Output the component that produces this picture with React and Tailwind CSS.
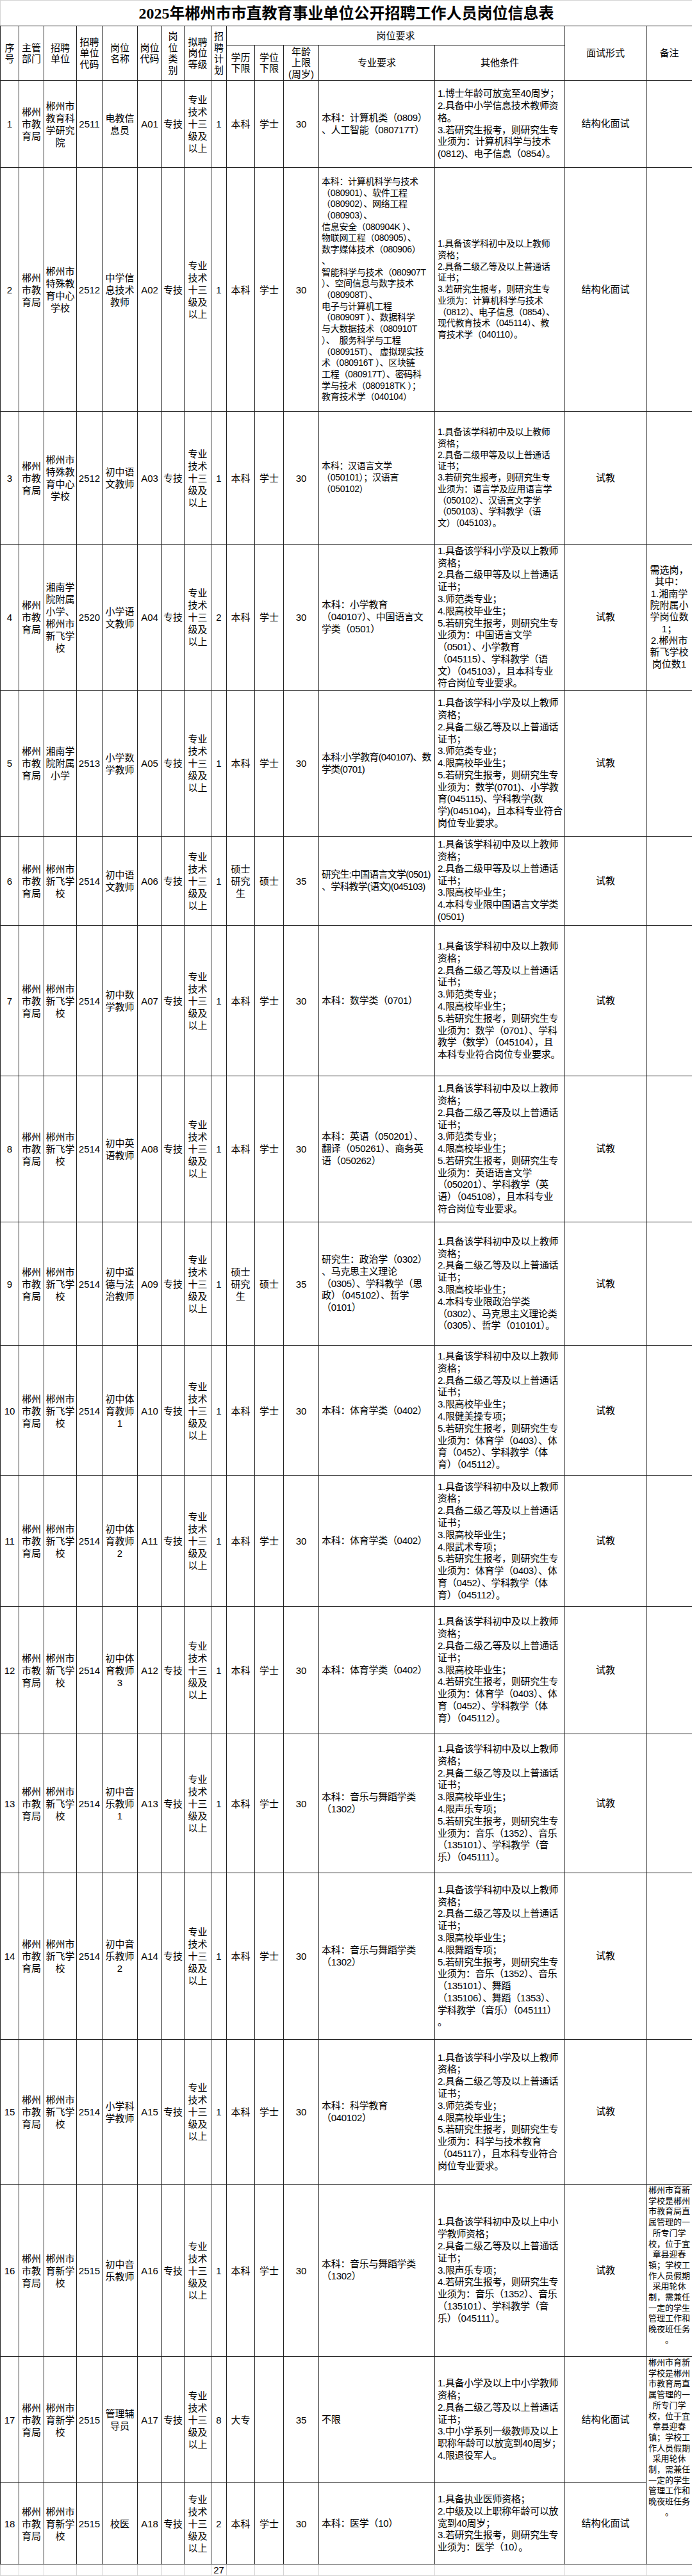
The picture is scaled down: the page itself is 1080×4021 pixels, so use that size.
import React from "react";

const FONT = "font-['Liberation_Sans','Noto_Sans_CJK_SC',sans-serif]";

const noteYuxin = [
  "郴州市育新",
  "学校是郴州",
  "市教育局直",
  "属管理的一",
  "所专门学",
  "校，位于宜",
  "章县迎春",
  "镇；学校工",
  "作人员假期",
  "采用轮休",
  "制，需兼任",
  "一定的学生",
  "管理工作和",
  "晚夜班任务",
  "。",
];

const rows = [
  {
    no: "1", unit: "郴州市教育科学研究院", unitCode: "2511", name: "电教信息员", code: "A01",
    plan: "1", edu: "本科", degree: "学士", age: "30", h: "h-[136px]",
    major: ["本科：计算机类（0809）", "、人工智能（080717T）"],
    other: [
      "1.博士年龄可放宽至40周岁；",
      "2.具备中小学信息技术教师资",
      "格。",
      "3.若研究生报考，则研究生专",
      "业须为：计算机科学与技术",
      "(0812)、电子信息（0854）。",
    ],
    exam: "结构化面试",
  },
  {
    no: "2", unit: "郴州市特殊教育中心学校", unitCode: "2512", name: "中学信息技术教师", code: "A02",
    plan: "1", edu: "本科", degree: "学士", age: "30", h: "h-[381px]", tight: true,
    major: [
      "本科：计算机科学与技术",
      "（080901）、软件工程",
      "（080902）、网络工程",
      "（080903）、",
      "信息安全（080904K ）、",
      "物联网工程（080905）、",
      "数字媒体技术（080906）",
      "、",
      "智能科学与技术（080907T",
      "）、空间信息与数字技术",
      "（080908T）、",
      "电子与计算机工程",
      "（080909T ）、数据科学",
      "与大数据技术（080910T",
      "）、  服务科学与工程",
      "（080915T）、 虚拟现实技",
      "术（080916T ）、区块链",
      "工程（080917T）、密码科",
      "学与技术（080918TK ）；",
      "教育技术学（040104）",
    ],
    other: [
      "1.具备该学科初中及以上教师",
      "资格；",
      "2.具备二级乙等及以上普通话",
      "证书；",
      "3.若研究生报考，则研究生专",
      "业须为：计算机科学与技术",
      "（0812）、电子信息（0854）、",
      "现代教育技术（045114）、教",
      "育技术学（040110）。",
    ],
    exam: "结构化面试",
  },
  {
    no: "3", unit: "郴州市特殊教育中心学校", unitCode: "2512", name: "初中语文教师", code: "A03",
    plan: "1", edu: "本科", degree: "学士", age: "30", h: "h-[207px]", tight: true,
    major: ["本科：汉语言文学", "（050101）；汉语言", "（050102）"],
    other: [
      "1.具备该学科初中及以上教师",
      "资格；",
      "2.具备二级甲等及以上普通话",
      "证书；",
      "3.若研究生报考，则研究生专",
      "业须为：语言学及应用语言学",
      "（050102）、汉语言文字学",
      "（050103）、学科教学（语",
      "文）（045103）。",
    ],
    exam: "试教",
  },
  {
    no: "4", unit: "湘南学院附属小学、郴州市新飞学校", unitCode: "2520", name: "小学语文教师", code: "A04",
    plan: "2", edu: "本科", degree: "学士", age: "30", h: "h-[228px]",
    major: ["本科：小学教育", "（040107）、中国语言文", "学类（0501）"],
    other: [
      "1.具备该学科小学及以上教师",
      "资格；",
      "2.具备二级甲等及以上普通话",
      "证书；",
      "3.师范类专业；",
      "4.限高校毕业生；",
      "5.若研究生报考，则研究生专",
      "业须为：中国语言文学",
      "（0501）、小学教育",
      "（045115）、学科教学（语",
      "文）（045103），且本科专业",
      "符合岗位专业要求。",
    ],
    exam: "试教",
    note: ["需选岗，", "其中：", "1.湘南学", "院附属小", "学岗位数", "1；", "2.郴州市", "新飞学校", "岗位数1"],
  },
  {
    no: "5", unit: "湘南学院附属小学", unitCode: "2513", name: "小学数学教师", code: "A05",
    plan: "1", edu: "本科", degree: "学士", age: "30", h: "h-[228px]", squeeze: true,
    major: ["本科:小学教育(040107)、数", "学类(0701)"],
    other: [
      "1.具备该学科小学及以上教师",
      "资格；",
      "2.具备二级乙等及以上普通话",
      "证书；",
      "3.师范类专业；",
      "4.限高校毕业生；",
      "5.若研究生报考，则研究生专",
      "业须为：数学(0701)、小学教",
      "育(045115)、学科教学(数",
      "学)(045104)，且本科专业符合",
      "岗位专业要求。",
    ],
    exam: "试教",
  },
  {
    no: "6", unit: "郴州市新飞学校", unitCode: "2514", name: "初中语文教师", code: "A06",
    plan: "1", edu: "硕士研究生", degree: "硕士", age: "35", h: "h-[139px]", squeeze: true,
    major: ["研究生:中国语言文学(0501)", "、学科教学(语文)(045103)"],
    other: [
      "1.具备该学科初中及以上教师",
      "资格；",
      "2.具备二级甲等及以上普通话",
      "证书；",
      "3.限高校毕业生；",
      "4.本科专业限中国语言文学类",
      "(0501)",
    ],
    exam: "试教",
  },
  {
    no: "7", unit: "郴州市新飞学校", unitCode: "2514", name: "初中数学教师", code: "A07",
    plan: "1", edu: "本科", degree: "学士", age: "30", h: "h-[235px]",
    major: ["本科：数学类（0701）"],
    other: [
      "1.具备该学科初中及以上教师",
      "资格；",
      "2.具备二级乙等及以上普通话",
      "证书；",
      "3.师范类专业；",
      "4.限高校毕业生；",
      "5.若研究生报考，则研究生专",
      "业须为：数学（0701）、学科",
      "教学（数学）（045104），且",
      "本科专业符合岗位专业要求。",
    ],
    exam: "试教",
  },
  {
    no: "8", unit: "郴州市新飞学校", unitCode: "2514", name: "初中英语教师", code: "A08",
    plan: "1", edu: "本科", degree: "学士", age: "30", h: "h-[228px]",
    major: ["本科：英语（050201）、", "翻译（050261）、商务英", "语（050262）"],
    other: [
      "1.具备该学科初中及以上教师",
      "资格；",
      "2.具备二级乙等及以上普通话",
      "证书；",
      "3.师范类专业；",
      "4.限高校毕业生；",
      "5.若研究生报考，则研究生专",
      "业须为：英语语言文学",
      "（050201）、学科教学（英",
      "语）（045108），且本科专业",
      "符合岗位专业要求。",
    ],
    exam: "试教",
  },
  {
    no: "9", unit: "郴州市新飞学校", unitCode: "2514", name: "初中道德与法治教师", code: "A09",
    plan: "1", edu: "硕士研究生", degree: "硕士", age: "35", h: "h-[193px]",
    major: ["研究生：政治学（0302）", "、马克思主义理论", "（0305）、学科教学（思", "政）（045102）、哲学", "（0101）"],
    other: [
      "1.具备该学科初中及以上教师",
      "资格；",
      "2.具备二级乙等及以上普通话",
      "证书；",
      "3.限高校毕业生；",
      "4.本科专业限政治学类",
      "（0302）、马克思主义理论类",
      "（0305）、哲学（010101）。",
    ],
    exam: "试教",
  },
  {
    no: "10", unit: "郴州市新飞学校", unitCode: "2514", name: "初中体育教师1", code: "A10",
    plan: "1", edu: "本科", degree: "学士", age: "30", h: "h-[203px]",
    major: ["本科：体育学类（0402）"],
    other: [
      "1.具备该学科初中及以上教师",
      "资格；",
      "2.具备二级乙等及以上普通话",
      "证书；",
      "3.限高校毕业生；",
      "4.限健美操专项；",
      "5.若研究生报考，则研究生专",
      "业须为：体育学（0403）、体",
      "育（0452）、学科教学（体",
      "育）（045112）。",
    ],
    exam: "试教",
  },
  {
    no: "11", unit: "郴州市新飞学校", unitCode: "2514", name: "初中体育教师2", code: "A11",
    plan: "1", edu: "本科", degree: "学士", age: "30", h: "h-[204px]",
    major: ["本科：体育学类（0402）"],
    other: [
      "1.具备该学科初中及以上教师",
      "资格；",
      "2.具备二级乙等及以上普通话",
      "证书；",
      "3.限高校毕业生；",
      "4.限武术专项；",
      "5.若研究生报考，则研究生专",
      "业须为：体育学（0403）、体",
      "育（0452）、学科教学（体",
      "育）（045112）。",
    ],
    exam: "试教",
  },
  {
    no: "12", unit: "郴州市新飞学校", unitCode: "2514", name: "初中体育教师3", code: "A12",
    plan: "1", edu: "本科", degree: "学士", age: "30", h: "h-[199px]",
    major: ["本科：体育学类（0402）"],
    other: [
      "1.具备该学科初中及以上教师",
      "资格；",
      "2.具备二级乙等及以上普通话",
      "证书；",
      "3.限高校毕业生；",
      "4.若研究生报考，则研究生专",
      "业须为：体育学（0403）、体",
      "育（0452）、学科教学（体",
      "育）（045112）。",
    ],
    exam: "试教",
  },
  {
    no: "13", unit: "郴州市新飞学校", unitCode: "2514", name: "初中音乐教师1", code: "A13",
    plan: "1", edu: "本科", degree: "学士", age: "30", h: "h-[217px]",
    major: ["本科：音乐与舞蹈学类", "（1302）"],
    other: [
      "1.具备该学科初中及以上教师",
      "资格；",
      "2.具备二级乙等及以上普通话",
      "证书；",
      "3.限高校毕业生；",
      "4.限声乐专项；",
      "5.若研究生报考，则研究生专",
      "业须为：音乐（1352）、音乐",
      "（135101）、学科教学（音",
      "乐）（045111）。",
    ],
    exam: "试教",
  },
  {
    no: "14", unit: "郴州市新飞学校", unitCode: "2514", name: "初中音乐教师2", code: "A14",
    plan: "1", edu: "本科", degree: "学士", age: "30", h: "h-[260px]",
    major: ["本科：音乐与舞蹈学类", "（1302）"],
    other: [
      "1.具备该学科初中及以上教师",
      "资格；",
      "2.具备二级乙等及以上普通话",
      "证书；",
      "3.限高校毕业生；",
      "4.限舞蹈专项；",
      "5.若研究生报考，则研究生专",
      "业须为：音乐（1352）、音乐",
      "（135101）、舞蹈",
      "（135106）、舞蹈（1353）、",
      "学科教学（音乐）（045111）",
      "。",
    ],
    exam: "试教",
  },
  {
    no: "15", unit: "郴州市新飞学校", unitCode: "2514", name: "小学科学教师", code: "A15",
    plan: "1", edu: "本科", degree: "学士", age: "30", h: "h-[226px]",
    major: ["本科：科学教育", "（040102）"],
    other: [
      "1.具备该学科小学及以上教师",
      "资格；",
      "2.具备二级乙等及以上普通话",
      "证书；",
      "3.师范类专业；",
      "4.限高校毕业生；",
      "5.若研究生报考，则研究生专",
      "业须为：科学与技术教育",
      "（045117），且本科专业符合",
      "岗位专业要求。",
    ],
    exam: "试教",
  },
  {
    no: "16", unit: "郴州市育新学校", unitCode: "2515", name: "初中音乐教师", code: "A16",
    plan: "1", edu: "本科", degree: "学士", age: "30", h: "h-[269px]",
    major: ["本科：音乐与舞蹈学类", "（1302）"],
    other: [
      "1.具备该学科初中及以上中小",
      "学教师资格；",
      "2.具备二级乙等及以上普通话",
      "证书；",
      "3.限声乐专项；",
      "4.若研究生报考，则研究生专",
      "业须为：音乐（1352）、音乐",
      "（135101）、学科教学（音",
      "乐）（045111）。",
    ],
    exam: "试教",
    smallNote: noteYuxin,
  },
  {
    no: "17", unit: "郴州市育新学校", unitCode: "2515", name: "管理辅导员", code: "A17",
    plan: "8", edu: "大专", degree: "", age: "35", h: "h-[197px]",
    major: ["不限"],
    other: [
      "1.具备小学及以上中小学教师",
      "资格；",
      "2.具备二级乙等及以上普通话",
      "证书；",
      "3.中小学系列一级教师及以上",
      "职称年龄可以放宽到40周岁；",
      "4.限退役军人。",
    ],
    exam: "结构化面试",
    smallNote: noteYuxin,
    noteSpan: 2,
  },
  {
    no: "18", unit: "郴州市育新学校", unitCode: "2515", name: "校医", code: "A18",
    plan: "2", edu: "本科", degree: "学士", age: "30", h: "h-[127px]",
    major: ["本科：医学（10）"],
    other: [
      "1.具备执业医师资格；",
      "2.中级及以上职称年龄可以放",
      "宽到40周岁；",
      "3.若研究生报考，则研究生专",
      "业须为：医学（10）。",
    ],
    exam: "结构化面试",
    skipNote: true,
  },
];

const cell = "border border-[#222] align-middle";
const narrow = `${cell} px-[2px] text-center leading-[19px]`;

function Lines({ lines }) {
  return lines.map((l, i) => (
    <div key={i} className="whitespace-pre">
      {l}
    </div>
  ));
}

function DataRow({ r }) {
  const longText = r.tight
    ? "text-[14px] leading-[17.7px] tracking-[-0.3px]"
    : "leading-[18.8px] tracking-[-0.3px]";
  const majorText = r.squeeze ? "leading-[18.8px] tracking-[-0.8px]" : longText;
  return (
    <tr className={r.h}>
      <td className={narrow}>{r.no}</td>
      <td className={narrow}>郴州市教育局</td>
      <td className={narrow}>{r.unit}</td>
      <td className={narrow}>{r.unitCode}</td>
      <td className={narrow}>{r.name}</td>
      <td className={narrow}>{r.code}</td>
      <td className={narrow}>专技</td>
      <td className={narrow}>专业技术十三级及以上</td>
      <td className={narrow}>{r.plan}</td>
      <td className={narrow}>{r.edu}</td>
      <td className={narrow}>{r.degree}</td>
      <td className={narrow}>{r.age}</td>
      <td className={`${cell} pl-[4px] pr-[1px] text-left ${majorText}`}>
        <Lines lines={r.major} />
      </td>
      <td className={`${cell} pl-[4px] pr-[1px] text-left ${longText}`}>
        <Lines lines={r.other} />
      </td>
      <td className={`${cell} text-center`}>{r.exam}</td>
      {r.skipNote ? null : r.note ? (
        <td className={`${cell} px-[1px] text-center leading-[18.3px]`}>
          <Lines lines={r.note} />
        </td>
      ) : r.smallNote ? (
        <td
          rowSpan={r.noteSpan || 1}
          className="border border-[#222] align-top pt-[1px] px-[1px] text-center text-[13px] leading-[16.7px]"
        >
          <Lines lines={r.smallNote} />
        </td>
      ) : (
        <td className={cell}></td>
      )}
    </tr>
  );
}

export default function App() {
  const head = "border border-[#222] align-middle text-center font-normal leading-[17.5px] px-[1px]";
  const foot = "border border-[#d4d4d4]";
  return (
    <div className={`w-[1080px] bg-white text-black ${FONT}`}>
      <table className="w-[1080px] table-fixed border-collapse text-[15px]">
        <colgroup>
          <col className="w-[29px]" />
          <col className="w-[39px]" />
          <col className="w-[51px]" />
          <col className="w-[40px]" />
          <col className="w-[55px]" />
          <col className="w-[38px]" />
          <col className="w-[35px]" />
          <col className="w-[42px]" />
          <col className="w-[24px]" />
          <col className="w-[44px]" />
          <col className="w-[45px]" />
          <col className="w-[55px]" />
          <col className="w-[181px]" />
          <col className="w-[203px]" />
          <col className="w-[127px]" />
          <col className="w-[72px]" />
        </colgroup>
        <thead>
          <tr className="h-[40px]">
            <th
              colSpan={16}
              className="border border-[#d4d4d4] border-b-[#222] text-center align-middle font-['Liberation_Serif','Noto_Sans_CJK_SC',serif] text-[24px] font-bold"
            >
              2025年郴州市市直教育事业单位公开招聘工作人员岗位信息表
            </th>
          </tr>
          <tr className="h-[30px]">
            <th rowSpan={2} className={head}>序<br />号</th>
            <th rowSpan={2} className={head}>主管<br />部门</th>
            <th rowSpan={2} className={head}>招聘<br />单位</th>
            <th rowSpan={2} className={head}>招聘<br />单位<br />代码</th>
            <th rowSpan={2} className={head}>岗位<br />名称</th>
            <th rowSpan={2} className={head}>岗位<br />代码</th>
            <th rowSpan={2} className={head}>岗<br />位<br />类<br />别</th>
            <th rowSpan={2} className={head}>拟聘<br />岗位<br />等级</th>
            <th rowSpan={2} className={head}>招<br />聘<br />计<br />划</th>
            <th colSpan={5} className={head}>岗位要求</th>
            <th rowSpan={2} className={head}>面试形式</th>
            <th rowSpan={2} className={head}>备注</th>
          </tr>
          <tr className="h-[55px]">
            <th className={head}>学历<br />下限</th>
            <th className={head}>学位<br />下限</th>
            <th className={head}>年龄<br />上限<br />(周岁)</th>
            <th className={head}>专业要求</th>
            <th className={head}>其他条件</th>
          </tr>
        </thead>
        <tbody>
          {rows.map((r) => (
            <DataRow key={r.no} r={r} />
          ))}
          <tr className="h-[18px]">
            <td className={foot}></td>
            <td className={foot}></td>
            <td className={foot}></td>
            <td className={foot}></td>
            <td className={foot}></td>
            <td className={foot}></td>
            <td className={foot}></td>
            <td className={foot}></td>
            <td className={`${foot} text-center leading-none`}>27</td>
            <td className={foot}></td>
            <td className={foot}></td>
            <td className={foot}></td>
            <td className={foot}></td>
            <td className={foot}></td>
            <td className={foot}></td>
            <td className={foot}></td>
          </tr>
        </tbody>
      </table>
    </div>
  );
}
